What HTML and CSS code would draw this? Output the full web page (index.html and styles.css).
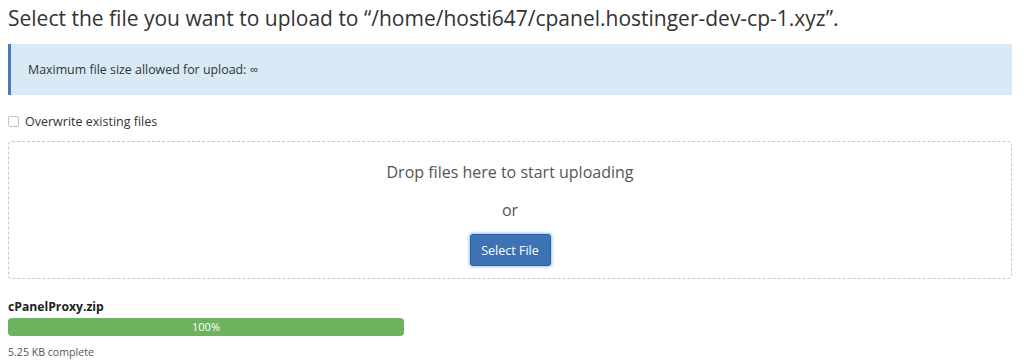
FILE: index.html
```html
<!DOCTYPE html>
<html lang="en">
<head>
    <meta charset="UTF-8">
    <meta name="viewport" content="width=device-width, initial-scale=1.0">
    <title>File Upload</title>

    <!-- CSS -->
    <link rel="stylesheet" href="styles.css">
</head>
<body>

    <h1 class="titulo">Select the file you want to upload to “/home/hosti647/cpanel.hostinger-dev-cp-1.xyz”.</h1>

    <!-- Aviso de tamanho -->
    <div class="aviso">
        Maximum file size allowed for upload: ∞
    </div>

    <label class="sobrescrever">
        <input type="checkbox" name="overwrite">
        <span>Overwrite existing files</span>
    </label>

    <!-- Área de soltar arquivos -->
    <div class="dropzone">
        <p class="drop-texto">Drop files here to start uploading</p>
        <p class="drop-ou">or</p>
        <button type="button" class="btn-select">Select File</button>
    </div>

    <!-- Progresso -->
    <div class="upload-item">
        <div class="upload-nome">cPanelProxy.zip</div>
        <div class="progresso">
            <div class="progresso-barra" style="width: 100%;">100%</div>
        </div>
        <div class="upload-status">5.25 KB complete</div>
    </div>

</body>
</html>
```

FILE: styles.css
```css
body {
    font-family: 'Open Sans', Arial, sans-serif;
    margin: 0;
    padding: 0 12px 0 8px;
    color: #333;
    background-color: #fff;
}

.titulo {
    font-size: 21px;
    font-weight: normal;
    margin: 0;
    padding-top: 2px;
    line-height: 32px;
    color: #333;
}

.aviso {
    margin-top: 10px;
    height: 51px;
    box-sizing: border-box;
    background-color: #d9eaf7;
    border-left: 3px solid #4a7bc0;
    padding: 0 17px;
    display: flex;
    align-items: center;
    font-size: 12.4px;
    color: #333;
}

.sobrescrever {
    display: flex;
    align-items: center;
    gap: 6px;
    margin-top: 18px;
    font-size: 12.5px;
    color: #333;
}

.sobrescrever input {
    margin: 0;
    width: 11px;
    height: 11px;
    appearance: none;
    border: 1px solid #c4c4c4;
    border-radius: 2px;
    background-color: #fff;
}

.dropzone {
    margin-top: 11px;
    height: 138px;
    box-sizing: border-box;
    border: 1px dashed #c8c8c8;
    border-radius: 4px;
    display: flex;
    flex-direction: column;
    align-items: center;
    padding-top: 18px;
}

.drop-texto {
    margin: 0;
    font-size: 16px;
    line-height: 24px;
    color: #555;
}

.drop-ou {
    margin: 14px 0 0;
    font-size: 16px;
    line-height: 24px;
    color: #555;
}

.btn-select {
    margin-top: 12px;
    width: 81px;
    height: 32px;
    font-family: 'Open Sans', Arial, sans-serif;
    font-size: 12.5px;
    color: #fff;
    background-color: #3d72b4;
    border: 1px solid #2e5f9e;
    border-radius: 3px;
    box-shadow: 0 0 3px 1px rgba(102, 175, 233, 0.7);
    cursor: pointer;
}

.upload-item {
    margin-top: 19px;
    width: 396px;
}

.upload-nome {
    font-size: 12.2px;
    font-weight: bold;
    line-height: 18px;
    color: #222;
}

.progresso {
    margin-top: 2px;
    height: 18px;
    background-color: #eee;
    border-radius: 4px;
    overflow: hidden;
}

.progresso-barra {
    height: 100%;
    background-color: #6db35f;
    color: #fff;
    font-size: 11px;
    line-height: 18px;
    text-align: center;
}

.upload-status {
    margin-top: 8px;
    font-size: 10.6px;
    line-height: 16px;
    color: #555;
}
```
